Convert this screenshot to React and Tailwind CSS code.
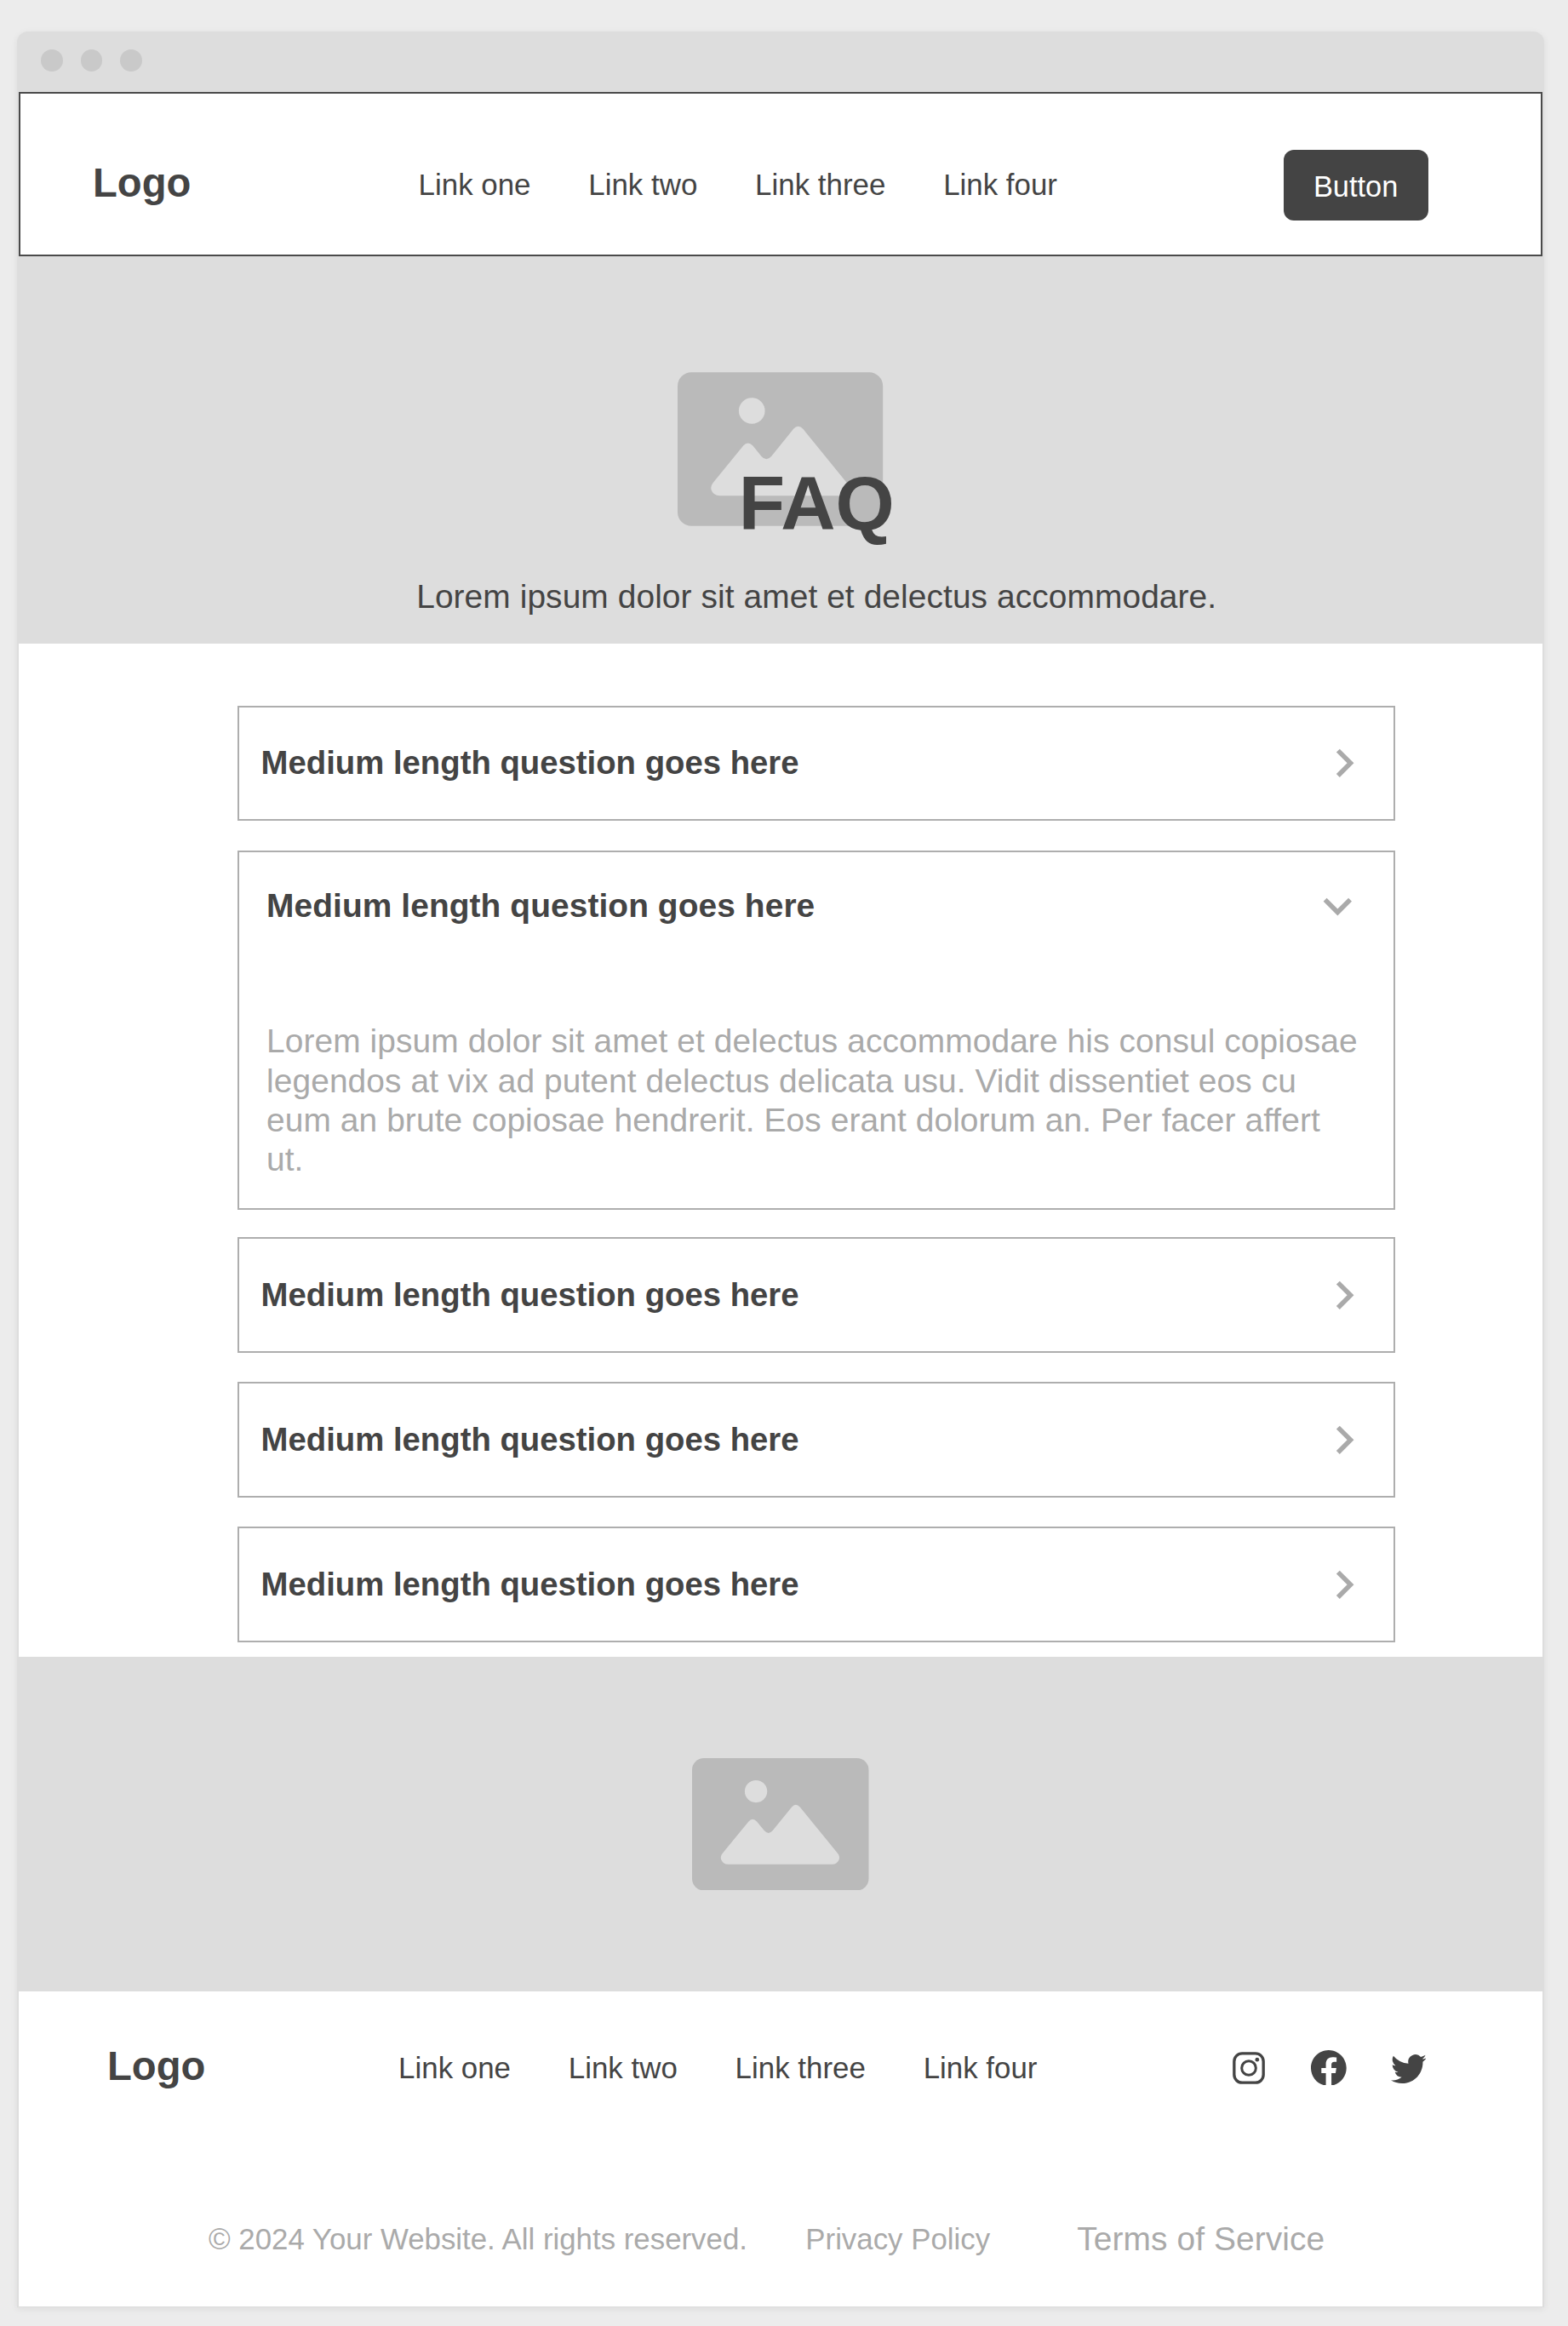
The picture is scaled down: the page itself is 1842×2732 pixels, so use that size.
import { BsFacebook, BsTwitter } from 'react-icons/bs';

const LINKS = ['Link one', 'Link two', 'Link three', 'Link four'];
const QUESTION = 'Medium length question goes here';

function Logo({ className }) {
  return (
    <div className={`shrink-0 text-[47.2px] leading-[48px] font-bold ${className}`}>Logo</div>
  );
}

function NavLinks({ className }) {
  return (
    <nav className={`flex gap-[67.8px] text-[34.9px] leading-[40px] whitespace-nowrap ${className}`}>
      {LINKS.map((label) => (
        <a key={label}>{label}</a>
      ))}
    </nav>
  );
}

function ImagePlaceholder({ className }) {
  return (
    <svg viewBox="0 0 622 466" className={`shrink-0 ${className}`}>
      <rect width="622" height="466" rx="42" fill="#bababa" />
      <circle cx="225" cy="117" r="39.5" fill="#dddddd" />
      <path
        fill="#dddddd"
        d="M108 334 L199 223 Q213 207 228 223 L254 255 Q269 272 284 255 L351 172 Q365 156 380 172 L512 334 Q521 345 518 356 Q512 374 492 374 H128 Q108 374 102 356 Q99 345 108 334 Z"
      />
    </svg>
  );
}

function ChevronRight() {
  return (
    <svg viewBox="0 0 24 24" className="size-[66.7px] shrink-0" fill="#aaaaaa">
      <path d="M10 6 8.59 7.41 13.17 12l-4.58 4.59L10 18l6-6z" />
    </svg>
  );
}

function ChevronDown() {
  return (
    <svg viewBox="0 0 24 24" className="size-[66.7px] shrink-0" fill="#aaaaaa">
      <path d="M16.59 8.59 12 13.17 7.41 8.59 6 10l6 6 6-6z" />
    </svg>
  );
}

function InstagramIcon() {
  return (
    <svg viewBox="0 0 125 125" className="size-[41.7px]" fill="none" stroke="#444444">
      <rect x="11.5" y="11.5" width="103" height="103" rx="28" strokeWidth="10" />
      <circle cx="63" cy="63" r="25" strokeWidth="9" />
      <circle cx="92.5" cy="33.5" r="7" fill="#444444" stroke="none" />
    </svg>
  );
}

function ClosedQuestion({ className }) {
  return (
    <div className={`flex items-center justify-between border-2 border-[#aeaeae] pr-[24px] pl-[25.6px] ${className}`}>
      <h2 className="text-[38.3px] leading-[46px] font-bold">{QUESTION}</h2>
      <ChevronRight />
    </div>
  );
}

function OpenQuestion() {
  return (
    <div className="mt-[35px] h-[422px] border-2 border-[#aeaeae] pl-[32px]">
      <div className="flex items-start justify-between pr-[32.2px]">
        <h2 className="mt-[39.8px] text-[38.9px] leading-[46px] font-bold tracking-[0.08px]">{QUESTION}</h2>
        <div className="mt-[29.8px] h-[66.7px]">
          <ChevronDown />
        </div>
      </div>
      <p className="mt-[103px] text-[38.9px] leading-[46.33px] tracking-[0.09px] whitespace-nowrap text-[#aaaaaa]">
        Lorem ipsum dolor sit amet et delectus accommodare his consul copiosae
        <br />
        legendos at vix ad putent delectus delicata usu. Vidit dissentiet eos cu
        <br />
        eum an brute copiosae hendrerit. Eos erant dolorum an. Per facer affert
        <br />
        ut.
      </p>
    </div>
  );
}

export default function App() {
  return (
    <div className="h-[2732px] w-[1842px] overflow-hidden bg-[#ececec] pt-[37px] pl-[20px] font-['Liberation_Sans',Arial,sans-serif] text-[#444444]">
      <div className="flex h-[2673px] w-[1794px] flex-col rounded-t-[13px] bg-[#dddddd] px-[2px] shadow-[0_2px_8px_rgba(0,0,0,0.07)]">
        <div className="flex h-[71px] shrink-0 gap-[21.1px] pt-[21px] pl-[26px]">
          <span className="size-[25.6px] rounded-full bg-[#c9c9c9]" />
          <span className="size-[25.6px] rounded-full bg-[#c9c9c9]" />
          <span className="size-[25.6px] rounded-full bg-[#c9c9c9]" />
        </div>

        <header className="flex h-[193px] shrink-0 items-start border-2 border-[#4a4a4a] bg-white pr-[132.4px] pl-[85px]">
          <Logo className="mt-[81px] w-[382.6px]" />
          <NavLinks className="mt-[87px]" />
          <button className="mt-[65.6px] ml-auto flex h-[83.2px] w-[170px] items-center justify-center rounded-[12px] bg-[#444444] pt-[4px] text-[34.4px] leading-[40px] text-white">
            Button
          </button>
        </header>

        <section className="flex h-[455px] shrink-0 flex-col items-center">
          <ImagePlaceholder className="mt-[136px] h-[181px] w-[241.2px]" />
          <div className="relative -mt-[70.7px] w-full pl-[84.4px] text-center">
            <h1 className="text-[89px] leading-[88px] font-bold">FAQ</h1>
            <p className="mt-[42.7px] text-[38.9px] leading-[46px] tracking-[0.08px]">
              Lorem ipsum dolor sit amet et delectus accommodare.
            </p>
          </div>
        </section>

        <main className="h-[1190px] shrink-0 bg-white pt-[73px] pl-[257px]">
          <div className="flex w-[1360px] flex-col">
            <ClosedQuestion className="h-[135px] pb-px" />
            <OpenQuestion />
            <ClosedQuestion className="mt-[32px] h-[136px]" />
            <ClosedQuestion className="mt-[34px] h-[136px]" />
            <ClosedQuestion className="mt-[34px] h-[136px]" />
          </div>
        </main>

        <section className="flex h-[393px] shrink-0 items-center justify-center">
          <ImagePlaceholder className="h-[155.5px] w-[207.5px]" />
        </section>

        <footer className="h-[370px] shrink-0 bg-white">
          <div className="flex h-[112px] items-start pr-[136.7px] pl-[104px]">
            <Logo className="mt-[64.3px] w-[342.1px]" />
            <NavLinks className="mt-[70.3px]" />
            <div className="mt-[68.7px] ml-auto flex gap-[51.9px] text-[41.7px]">
              <InstagramIcon />
              <BsFacebook />
              <BsTwitter />
            </div>
          </div>
          <div className="mt-[158.8px] flex pl-[223px] text-[34.85px] leading-[40px] whitespace-nowrap text-[#aaaaaa]">
            <p className="w-[701.3px]">© 2024 Your Website. All rights reserved.</p>
            <a className="w-[319px]">Privacy Policy</a>
            <a className="mt-[0.7px] text-[38.9px] tracking-[0.08px]">Terms of Service</a>
          </div>
        </footer>
      </div>
    </div>
  );
}
